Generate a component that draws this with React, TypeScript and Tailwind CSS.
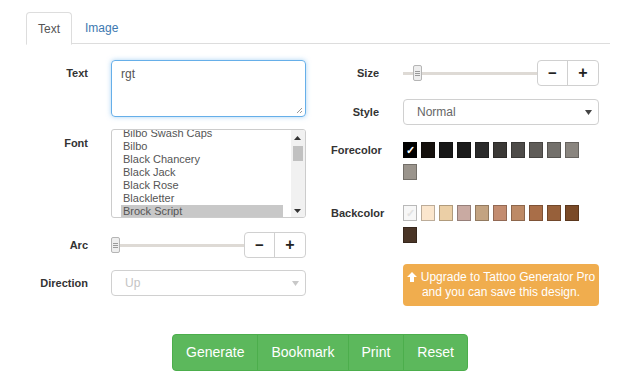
import React from "react";

// 폰트 목록 (스크롤된 상태로 보임)
const fonts = ["Bilbo Swash Caps", "Bilbo", "Black Chancery", "Black Jack", "Black Rose", "Blackletter", "Brock Script"];

const foreColors = ["#000000", "#15110d", "#181818", "#1b1b1b", "#2a2a2a", "#3b3936", "#4d4b48", "#5f5c58", "#73706b", "#8a857f", "#9a948c"];
const backColors = ["#f7f7f7", "#fbe6cd", "#ebcfa6", "#c9aaa2", "#c3a381", "#c38c70", "#bd8a66", "#a96e48", "#97603a", "#7a4a27", "#4a3527"];

function Label({ children, w, className = "" }: { children: React.ReactNode; w: string; className?: string }) {
  return (
    <div className={`${w} shrink-0 whitespace-nowrap text-right text-[11px] font-bold leading-[13px] text-[#333] ${className}`}>
      {children}
    </div>
  );
}

function SliderRow({ handleLeft }: { handleLeft: string }) {
  return (
    <div className="flex h-[26px] w-full items-center">
      <div className="relative h-full flex-1">
        <div className="absolute left-0 right-0 top-[12px] h-[3px] bg-[#dedad5]" />
        <div
          className={`absolute top-[5px] ${handleLeft} flex h-[16px] w-[9px] flex-col items-center justify-center gap-[1px] rounded-[2px] border border-[#b5b5b5] bg-[#eeeeee]`}
        >
          <span className="h-[1px] w-[5px] bg-[#9a9a9a]" />
          <span className="h-[1px] w-[5px] bg-[#9a9a9a]" />
          <span className="h-[1px] w-[5px] bg-[#9a9a9a]" />
        </div>
      </div>
      <div className="flex h-[26px] rounded-[4px] border border-[#d0d0d0] bg-white">
        <button className="flex w-[30px] items-center justify-center border-r border-[#d0d0d0] text-[15px] font-bold text-[#222]">−</button>
        <button className="flex w-[30px] items-center justify-center text-[16px] font-bold text-[#222]">+</button>
      </div>
    </div>
  );
}

function SelectBox({ value, disabled }: { value: string; disabled?: boolean }) {
  return (
    <div className="flex h-[26px] w-full items-center justify-between rounded-[4px] border border-[#d0d0d0] bg-white pl-[13px] pr-[6px]">
      <span className={`text-[12px] ${disabled ? "text-[#c4c4c4]" : "text-[#666]"}`}>{value}</span>
      <svg width="7" height="5" viewBox="0 0 7 5">
        <path d="M0 0 L7 0 L3.5 5 Z" fill={disabled ? "#c8c8c8" : "#444"} />
      </svg>
    </div>
  );
}

function Swatches({ colors, checkColor }: { colors: string[]; checkColor: string }) {
  return (
    <div className="flex w-[196px] flex-wrap">
      {colors.map((c, i) => (
        <div
          key={i}
          className="mb-[6px] mr-[4px] flex h-[16px] w-[14px] items-center justify-center border border-[rgba(0,0,0,0.25)]"
          style={{ backgroundColor: c }}
        >
          {i === 0 && <span className={`text-[11px] font-bold leading-none ${checkColor}`}>✓</span>}
        </div>
      ))}
    </div>
  );
}

export default function App() {
  return (
    <div className="h-[380px] w-[640px] bg-white px-[26px] pt-[12px]" style={{ fontFamily: '"Liberation Sans", Arial, sans-serif' }}>
      {/* 탭 */}
      <div className="flex h-[32px] w-[584px] border-b border-[#dddddd]">
        <div className="-mb-[1px] flex h-[33px] items-center rounded-t-[4px] border border-b-white border-[#dddddd] bg-white px-[11px] text-[12px] text-[#555]">
          Text
        </div>
        <div className="flex items-center px-[13px] text-[12px] text-[#3d78b0]">Image</div>
      </div>

      {/* 폼 */}
      <div className="mt-[16px] flex">
        {/* 왼쪽 열 */}
        <div className="flex w-[292px] flex-col">
          <div className="flex gap-[23px]">
            <Label w="w-[62px]" className="pt-[7px]">Text</Label>
            <div className="relative h-[57px] w-[195px] rounded-[4px] border border-[#66afe9] px-[9px] pt-[4px] text-[12px] text-[#555] shadow-[0_0_5px_rgba(102,175,233,0.55)]">
              rgt
              <svg className="absolute bottom-[2px] right-[2px]" width="7" height="7" viewBox="0 0 7 7">
                <path d="M6 1 L1 6 M6 4 L4 6" stroke="#999" strokeWidth="1" />
              </svg>
            </div>
          </div>

          <div className="mt-[12px] flex gap-[23px]">
            <Label w="w-[62px]" className="pt-[8px]">Font</Label>
            <div className="flex h-[89px] w-[195px] overflow-hidden rounded-[3px] border border-[#cccccc] bg-white">
              <div className="ml-[9px] mr-[8px] flex-1 overflow-hidden">
                <div className="-mt-[3px]">
                  {fonts.map((f) => (
                    <div
                      key={f}
                      className={`h-[13px] pl-[2px] text-[11px] leading-[13px] text-[#555] ${f === "Brock Script" ? "bg-[#c8c8c8] text-[#333]" : ""}`}
                    >
                      {f}
                    </div>
                  ))}
                </div>
              </div>
              <div className="relative w-[14px] bg-[#f1f1f1]">
                <svg className="absolute left-[3px] top-[6px]" width="7" height="4" viewBox="0 0 7 4">
                  <path d="M3.5 0 L7 4 L0 4 Z" fill="#333" />
                </svg>
                <div className="absolute left-[2px] top-[16px] h-[15px] w-[10px] bg-[#c1c1c1]" />
                <svg className="absolute bottom-[4px] left-[3px]" width="7" height="4" viewBox="0 0 7 4">
                  <path d="M0 0 L7 0 L3.5 4 Z" fill="#333" />
                </svg>
              </div>
            </div>
          </div>

          <div className="mt-[14px] flex items-center gap-[23px]">
            <Label w="w-[62px]">Arc</Label>
            <div className="w-[195px]">
              <SliderRow handleLeft="left-0" />
            </div>
          </div>

          <div className="mt-[12px] flex items-center gap-[23px]">
            <Label w="w-[62px]">Direction</Label>
            <div className="w-[195px]">
              <SelectBox value="Up" disabled />
            </div>
          </div>
        </div>

        {/* 오른쪽 열 */}
        <div className="flex flex-col pl-[13px]">
          <div className="flex items-center gap-[24px]">
            <Label w="w-[48px]">Size</Label>
            <div className="w-[196px]">
              <SliderRow handleLeft="left-[10px]" />
            </div>
          </div>

          <div className="mt-[13px] flex items-center gap-[24px]">
            <Label w="w-[48px]">Style</Label>
            <div className="w-[196px]">
              <SelectBox value="Normal" />
            </div>
          </div>

          <div className="mt-[17px] flex gap-[24px]">
            <Label w="w-[48px]" className="pt-[2px]">Forecolor</Label>
            <Swatches colors={foreColors} checkColor="text-white" />
          </div>

          <div className="mt-[19px] flex gap-[24px]">
            <Label w="w-[48px]" className="pt-[2px]">Backcolor</Label>
            <Swatches colors={backColors} checkColor="text-[#e2e2e2]" />
          </div>

          <div className="mt-[15px] flex gap-[24px]">
            <div className="w-[48px] shrink-0" />
            <div className="w-[196px] rounded-[4px] bg-[#f0ad4e] py-[6px] text-center text-[12px] leading-[15px] text-white">
              <svg className="mr-[4px] inline-block align-[-1px]" width="10" height="10" viewBox="0 0 10 10">
                <path d="M5 0 L10 5 L7 5 L7 10 L3 10 L3 5 L0 5 Z" fill="#fff" />
              </svg>
              Upgrade to Tattoo Generator Pro
              <br />
              and you can save this design.
            </div>
          </div>
        </div>
      </div>

      {/* 하단 버튼 */}
      <div className="mt-[28px] flex justify-center">
        <div className="flex h-[37px] overflow-hidden rounded-[4px] border border-[#4cae4c] bg-[#5cb85c] text-[14px] text-white">
          <button className="px-[13px]">Generate</button>
          <button className="border-l border-[#4cae4c] px-[13px]">Bookmark</button>
          <button className="border-l border-[#4cae4c] px-[13px]">Print</button>
          <button className="border-l border-[#4cae4c] px-[13px]">Reset</button>
        </div>
      </div>
    </div>
  );
}
